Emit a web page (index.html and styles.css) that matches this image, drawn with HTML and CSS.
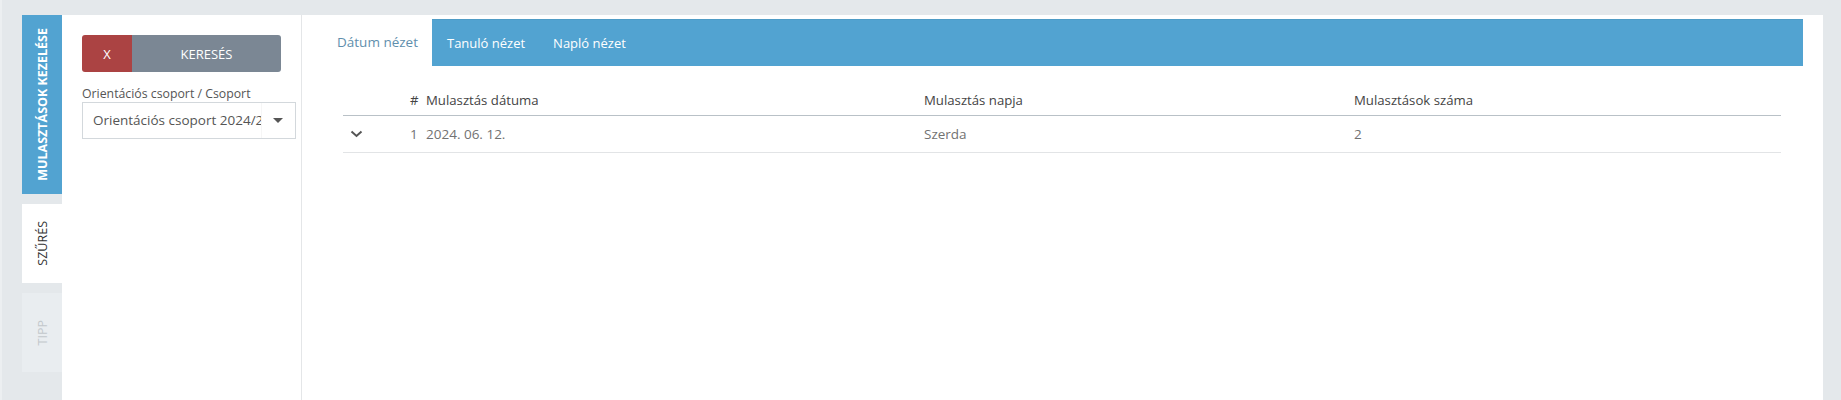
FILE: index.html
```html
<!DOCTYPE html>
<html lang="hu">
<head>
    <meta charset="UTF-8">
    <meta name="viewport" content="width=device-width, initial-scale=1.0">
    <title>Mulasztások kezelése</title>
    <link rel="stylesheet" href="styles.css">
</head>
<body>
    <div class="app">
        <nav class="side-tabs">
            <div class="side-tab side-tab-main"><span>MULASZTÁSOK KEZELÉSE</span></div>
            <div class="side-tab side-tab-filter"><span>SZŰRÉS</span></div>
            <div class="side-tab side-tab-tip"><span>TIPP</span></div>
        </nav>

        <aside class="filter-panel">
            <div class="filter-buttons">
                <button class="btn-clear">X</button>
                <button class="btn-search">KERESÉS</button>
            </div>
            <label class="filter-label">Orientációs csoport / Csoport</label>
            <div class="select-box">
                <span class="select-text">Orientációs csoport 2024/2025</span>
                <span class="select-arrow"></span>
            </div>
        </aside>

        <main class="content">
            <div class="view-tabs">
                <a class="view-tab active">Dátum nézet</a>
                <a class="view-tab">Tanuló nézet</a>
                <a class="view-tab">Napló nézet</a>
            </div>

            <div class="grid">
                <div class="grid-row grid-head">
                    <div></div>
                    <div>#</div>
                    <div>Mulasztás dátuma</div>
                    <div>Mulasztás napja</div>
                    <div>Mulasztások száma</div>
                </div>
                <div class="grid-row">
                    <div class="expand">
                        <svg width="13" height="8" viewBox="0 0 13 8"><polyline points="1.5,1.5 6.5,6 11.5,1.5" fill="none" stroke="#555" stroke-width="2"/></svg>
                    </div>
                    <div>1</div>
                    <div>2024. 06. 12.</div>
                    <div>Szerda</div>
                    <div>2</div>
                </div>
            </div>
        </main>
    </div>
</body>
</html>
```

FILE: styles.css
```css
body {
    margin: 0;
    background-color: #e4e8eb;
    font-family: "Open Sans", "Liberation Sans", sans-serif;
    color: #555;
}
.app {
    display: flex;
    min-height: 100vh;
    box-sizing: border-box;
    padding-top: 15px;
    padding-left: 20px;
    border-left: 2px solid #eceff1;
}
.side-tabs {
    width: 40px;
    display: flex;
    flex-direction: column;
    gap: 10px;
}
.side-tab {
    display: flex;
    align-items: center;
    justify-content: center;
    height: 79px;
    font-size: 12.5px;
}
.side-tab span {
    writing-mode: vertical-rl;
    transform: rotate(180deg);
    white-space: nowrap;
}
.side-tab-main {
    height: 179px;
    background-color: #52a3d1;
    color: white;
    font-weight: bold;
}
.side-tab-filter {
    background-color: white;
    color: #333;
}
.side-tab-tip {
    background-color: #e9edf0;
    color: #c3c8cc;
}
.filter-panel {
    width: 199px;
    padding: 20px;
    background-color: white;
    border-right: 1px solid #e4e6e8;
}
.filter-buttons {
    display: flex;
    height: 37px;
    border-radius: 3px;
    overflow: hidden;
}
.filter-buttons button {
    border: none;
    color: white;
    font-family: inherit;
    font-size: 13px;
    cursor: pointer;
}
.btn-clear {
    width: 50px;
    background-color: #ab4343;
}
.btn-search {
    flex: 1;
    background-color: #7b8794;
}
.filter-label {
    display: block;
    margin-top: 13px;
    font-size: 12.3px;
    line-height: 17px;
    color: #555;
    white-space: nowrap;
}
.select-box {
    display: flex;
    width: 214px;
    height: 37px;
    box-sizing: border-box;
    border: 1px solid #d3d8dc;
}
.select-text {
    flex: 1;
    padding-left: 10px;
    font-size: 13.5px;
    line-height: 35px;
    white-space: nowrap;
    overflow: hidden;
}
.select-arrow {
    width: 33px;
    position: relative;
    border-left: 1px solid #f6f6f6;
}
.select-arrow::after {
    content: "";
    position: absolute;
    left: 11px;
    top: 15px;
    border-left: 5px solid transparent;
    border-right: 5px solid transparent;
    border-top: 5px solid #555;
}
.content {
    flex: 1;
    margin-right: 18px;
    padding: 4px 20px 0 19px;
    background-color: white;
}
.view-tabs {
    display: flex;
    height: 47px;
    background-color: #52a3d1;
    border-top: 1px solid #4f9cc6;
    box-sizing: border-box;
}
.view-tab {
    padding: 0 13px 0 15px;
    line-height: 46px;
    font-size: 13px;
    color: white;
    cursor: pointer;
}
.view-tab.active {
    padding: 0 14px 0 16px;
    margin-top: -1px;
    line-height: 47px;
    font-size: 13.5px;
    background-color: white;
    color: #5f8fad;
}
.grid {
    margin: 16px 22px 0;
}
.grid-row {
    display: grid;
    grid-template-columns: 67px 16px 498px 430px 1fr;
    padding: 9px 0;
    line-height: 18px;
    font-size: 13.5px;
    color: #727272;
    border-bottom: 1px solid #e2e4e6;
}
.grid-head {
    padding: 9px 0 6px;
    font-size: 13.2px;
    font-weight: 500;
    color: #444;
    border-bottom: 1px solid #b9c1c7;
}
.expand {
    padding-left: 7px;
    display: flex;
    align-items: center;
}
```
